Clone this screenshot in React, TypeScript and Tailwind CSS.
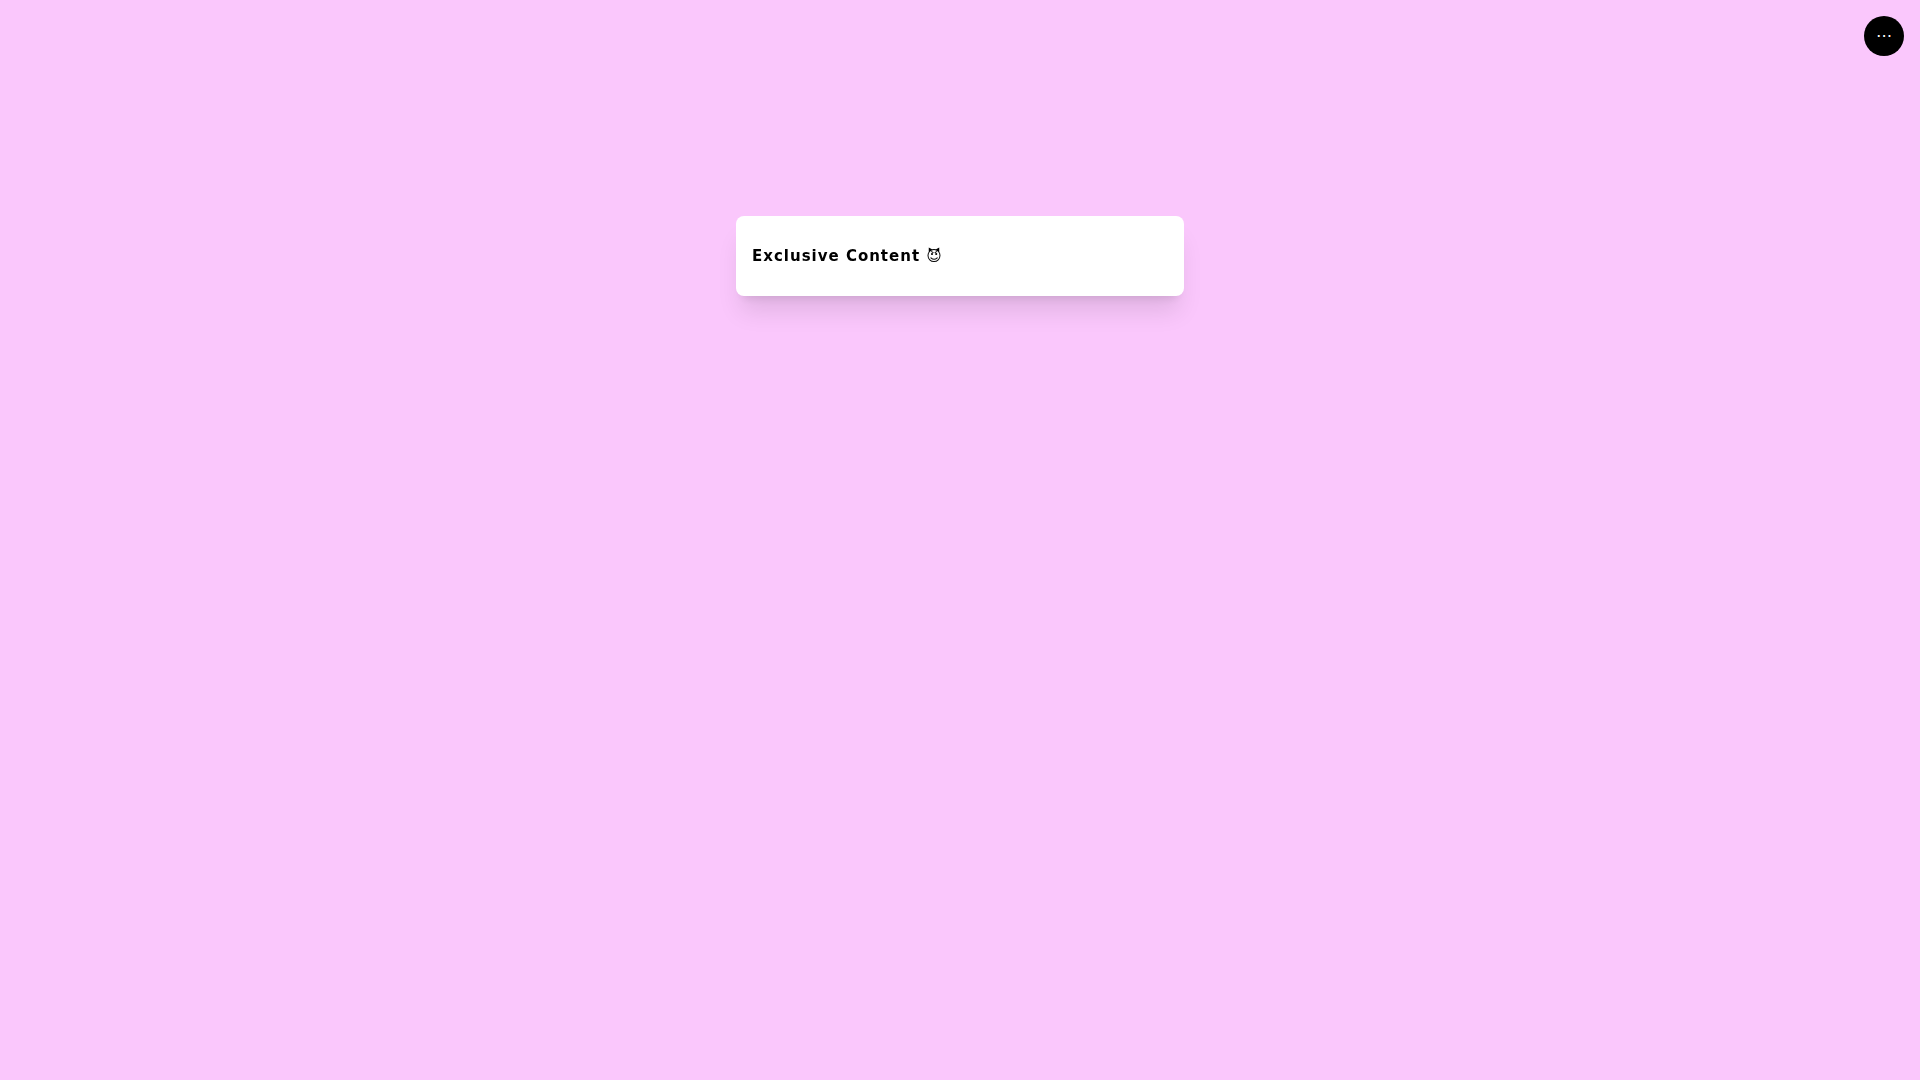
import React from "react";

const App: React.FC = () => {
  return (
    <div className="min-h-screen bg-[#fac7fc] flex flex-col items-center pt-[216px] font-['DejaVu_Sans',sans-serif]">
      <button className="fixed top-4 right-4 w-10 h-10 rounded-full bg-black text-white flex items-center justify-center">
        ⋯
      </button>

      <div className="w-full max-w-md bg-white rounded-lg shadow-xl px-4 py-7 will-change-transform">
        <h1 className="text-[15px] leading-6 font-bold tracking-[1px] text-black">Exclusive Content 😈</h1>
      </div>
    </div>
  );
};

export default App;
